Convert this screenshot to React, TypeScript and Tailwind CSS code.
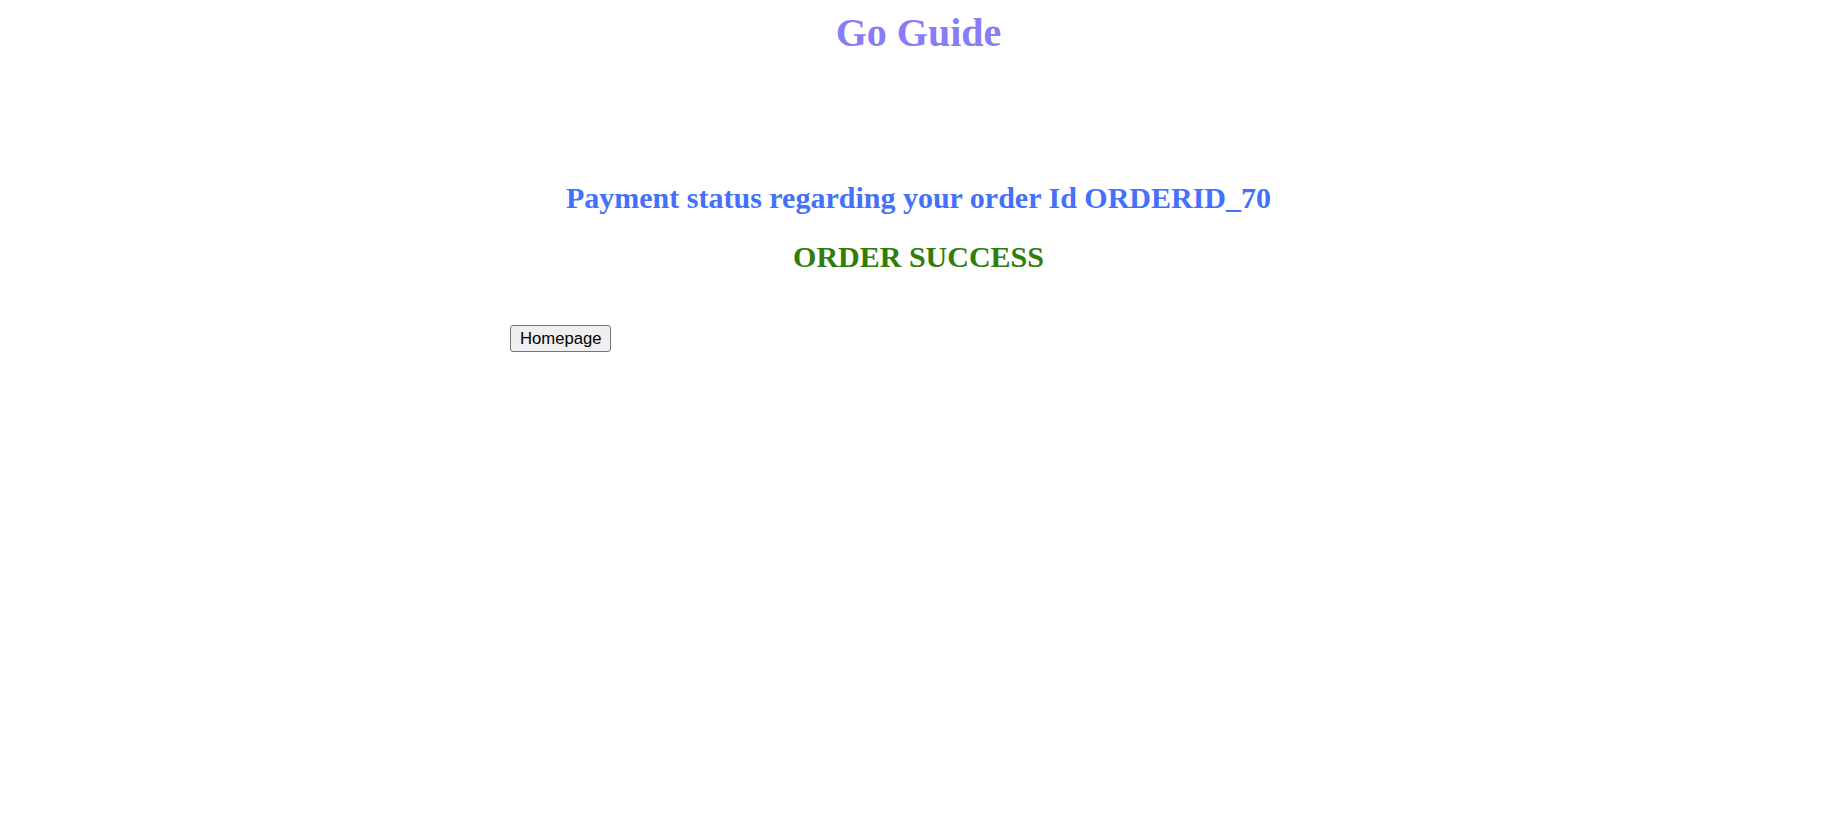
import React from 'react';

const App: React.FC = () => {
  return (
    <div className="min-h-screen bg-white font-['Liberation_Serif',serif]">
      <h1 className="pt-[10px] text-center text-[40px] font-bold leading-[46px] text-[#8a7cf8]">
        Go Guide
      </h1>

      <div className="mt-[125px] flex flex-col items-center">
        <h2 className="text-[30px] font-bold leading-[34px] text-[#4470fb]">
          Payment status regarding your order Id ORDERID_70
        </h2>
        <h2 className="mt-[25px] text-[30px] font-bold leading-[34px] text-[#2f7d0a]">
          ORDER SUCCESS
        </h2>
      </div>

      <div className="mt-[51px] pl-[510px]">
        <button
          type="button"
          className="h-[27px] rounded-[3px] border border-[#767676] bg-[#efefef] px-[9px] font-['Liberation_Sans',sans-serif] text-[16.67px] leading-[20px] text-black"
        >
          Homepage
        </button>
      </div>
    </div>
  );
};

export default App;
